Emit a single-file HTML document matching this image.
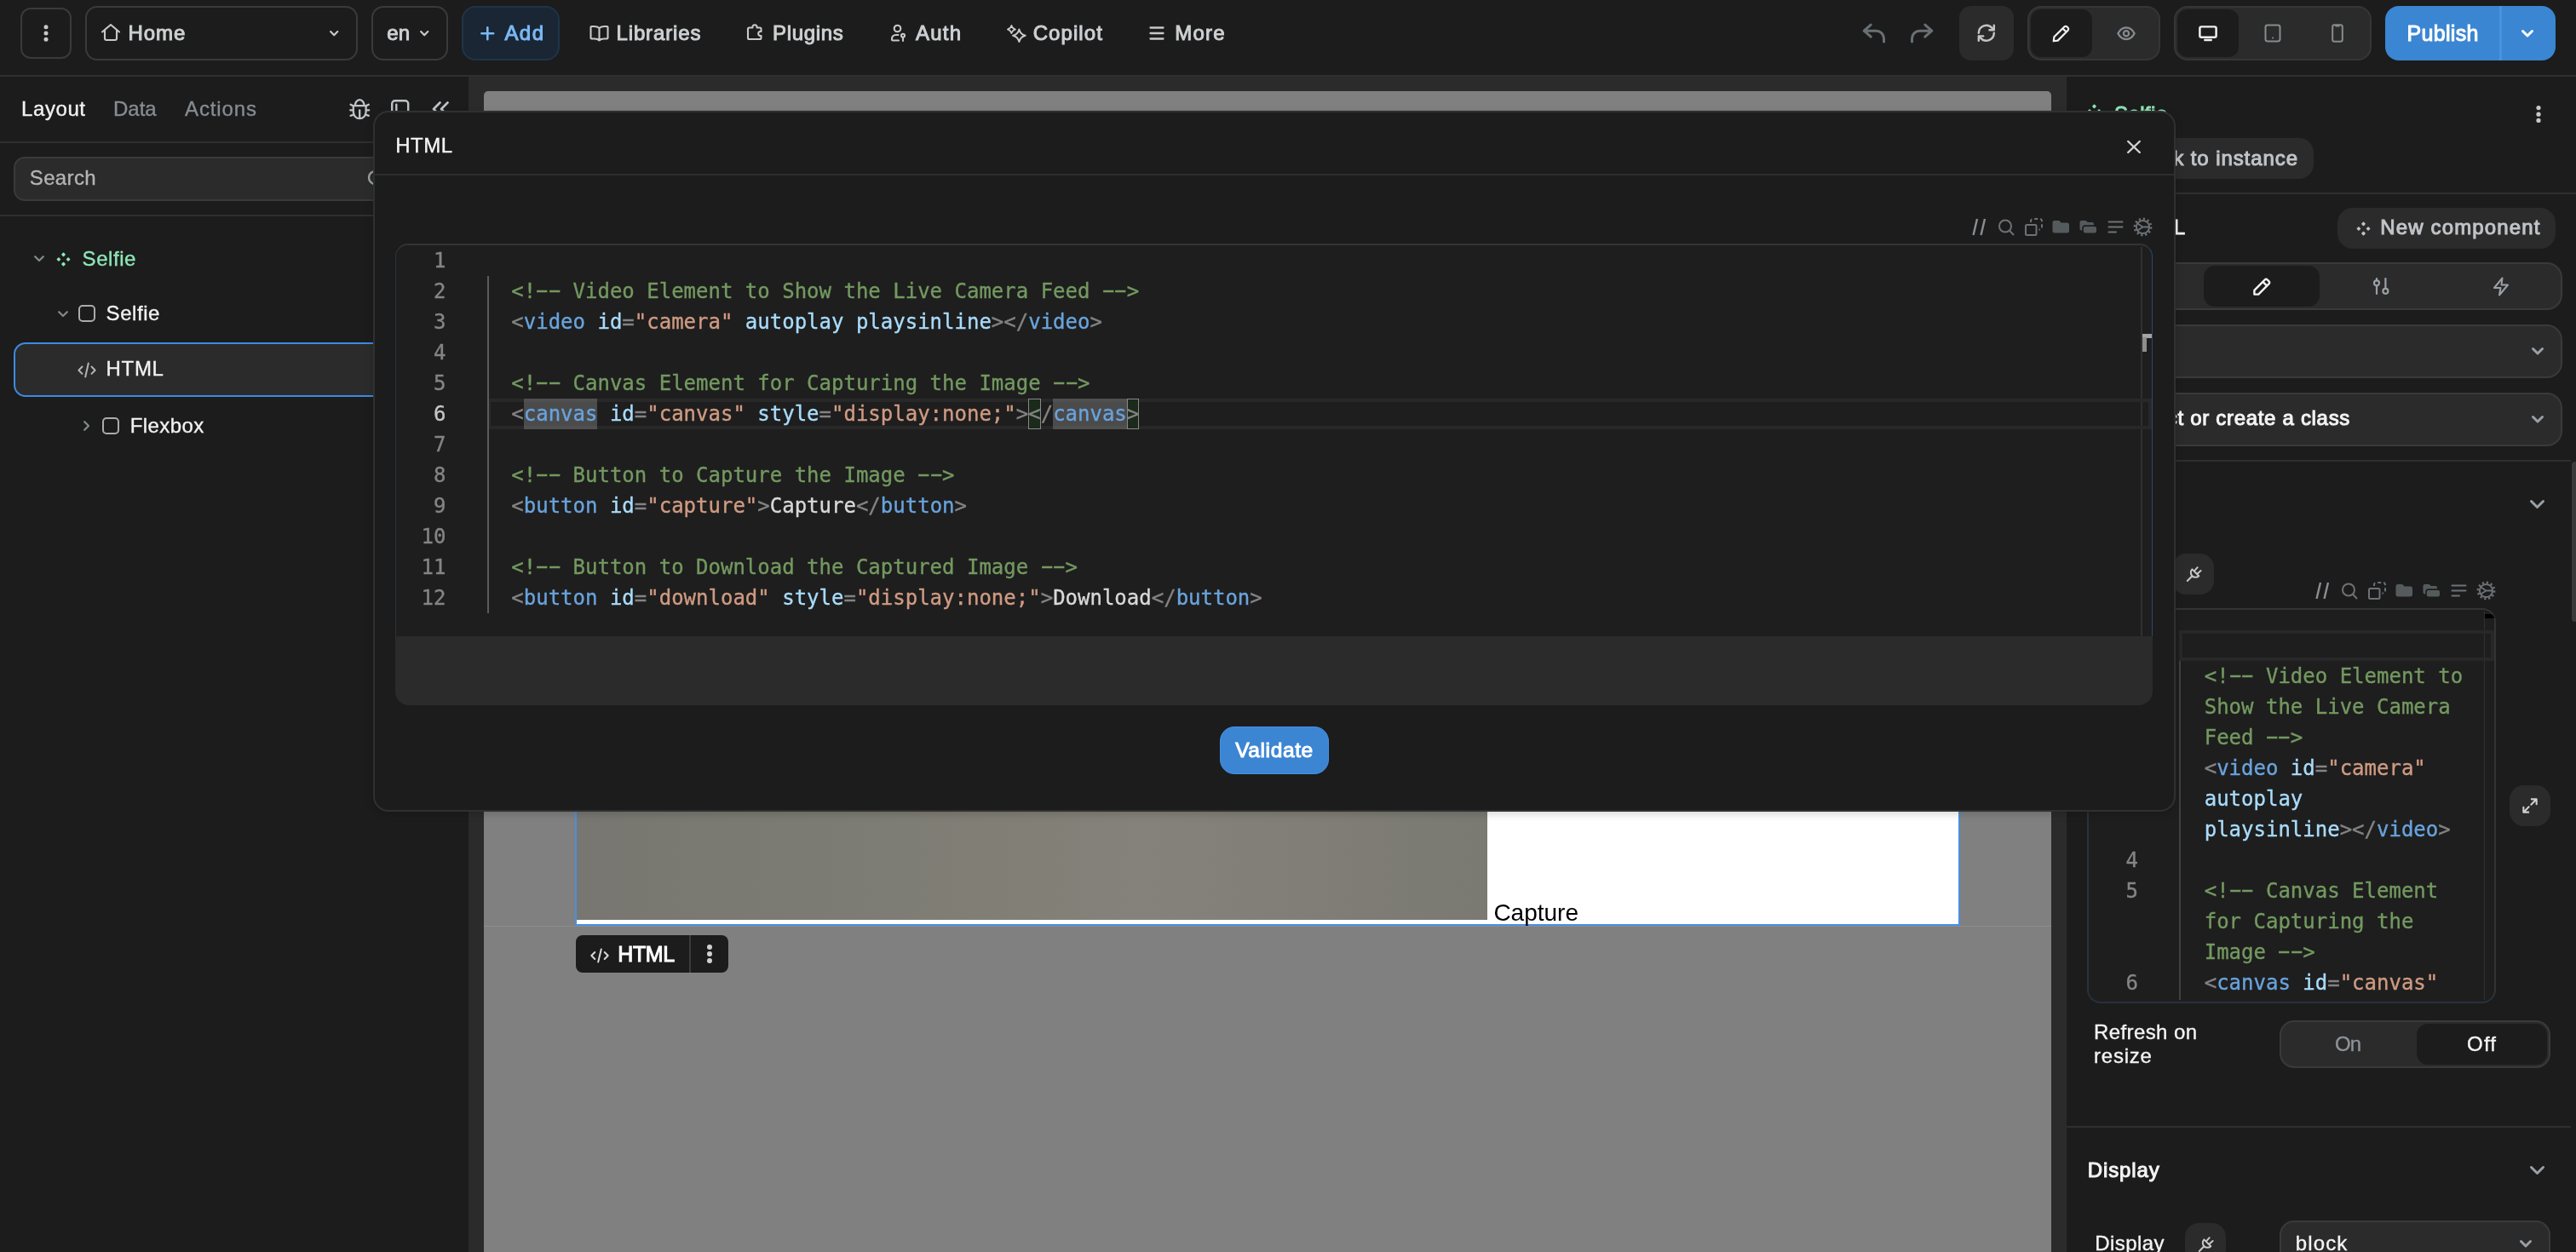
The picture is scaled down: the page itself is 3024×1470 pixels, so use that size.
<!DOCTYPE html>
<html lang="en">
<head>
<meta charset="utf-8">
<title>Editor</title>
<style>
*{box-sizing:border-box;margin:0;padding:0}
html,body{width:3024px;height:1470px;overflow:hidden;background:#1c1c1c}
body{position:relative;font-family:"Liberation Sans",sans-serif;color:#d6d6d6;font-size:24px;line-height:1}
.abs{position:absolute}
.t{position:absolute;white-space:nowrap;line-height:1;display:block;-webkit-text-stroke:0.35px currentColor}
.b{font-weight:400;-webkit-text-stroke:1px currentColor}
.m{-webkit-text-stroke:0.35px currentColor}
.bb{font-weight:700}
svg{position:absolute;overflow:visible}
.ic{fill:none;stroke:#c8c8c8;stroke-width:2.4;stroke-linecap:round;stroke-linejoin:round}
.mono{font-family:"DejaVu Sans Mono","Liberation Mono",monospace;font-size:24px;-webkit-text-stroke:0.35px currentColor}
/* ---------- top bar ---------- */
#topbar{left:0;top:0;width:3024px;height:88px;background:#1c1c1c;border-bottom:2px solid #2f2f2f;height:90px}
.obtn{border:2px solid #3a3a3a;border-radius:14px;background:#1c1c1c}
.fbtn{background:#2b2b2b;border-radius:14px}
.grp{background:#2b2b2b;border:2px solid #363636;border-radius:16px}
.act{background:#1c1c1c;border-radius:12px}
/* ---------- left ---------- */
#left{left:0;top:90px;width:550px;height:1380px;background:#1c1c1c}
.hl{position:absolute;height:2px;background:#2f2f2f}
/* ---------- canvas ---------- */
#canvasbg{left:550px;top:90px;width:1876px;height:1380px;background:#2b2b2b}
#frame{left:568px;top:107px;width:1840px;height:1400px;background:#808080;border-radius:5px 5px 0 0}
/* ---------- right ---------- */
#right{left:2426px;top:90px;width:598px;height:1380px;background:#1c1c1c}
/* ---------- modal ---------- */
#modal{left:437.5px;top:130px;width:2116.3px;height:823px;background:#1c1c1c;border:2px solid #2f3131;border-radius:18px;box-shadow:0 3px 10px rgba(0,0,0,.16)}
/* code colours */
.c{color:#739960}.g{color:#838383}.k{color:#69a3dd}.a{color:#a8dbfb}.s{color:#cf9a82}.w{color:#d8d8d8}
.hy{display:inline-block;transform:scaleX(1.9) translateY(-0.6px)}
.ln{position:absolute;text-align:right;color:#858585;line-height:36px;height:36px;white-space:pre}
.cl{position:absolute;line-height:36px;height:36px;white-space:pre}
@media (min-resolution:1.5dppx){html,body{width:1512px;height:735px}#root{zoom:.5}}
</style>
</head>
<body>
<div id="root" style="position:absolute;left:0;top:0;width:3024px;height:1470px;will-change:transform">

<!-- ================= TOP BAR ================= -->
<div id="topbar" class="abs">
  <div class="abs obtn" style="left:24px;top:9px;width:60px;height:60px;border-radius:12px"></div>
  <svg style="left:49px;top:27px" width="10" height="24" viewBox="0 0 10 24"><circle cx="5" cy="4.8" r="2.5" fill="#c8c8c8"/><circle cx="5" cy="12" r="2.5" fill="#c8c8c8"/><circle cx="5" cy="19.2" r="2.5" fill="#c8c8c8"/></svg>

  <div class="abs obtn" style="left:100px;top:7px;width:320px;height:64px"></div>
  <svg class="ic" style="left:118px;top:27px;stroke-width:2.1" width="24" height="22" viewBox="0 0 24 22"><path d="M2 10.5 L12 2 L22 10.5 M5 8.5 V18 a2 2 0 0 0 2 2 H17 a2 2 0 0 0 2 -2 V8.5"/></svg>
  <span class="t b" style="letter-spacing:0.92px;left:150.5px;top:26.5px;color:#cdd0d2">Home</span>
  <svg class="ic" style="left:387px;top:36px;stroke-width:2.2" width="10.4" height="6.6" viewBox="0 0 10.4 6.6"><path d="M1.1 1.1 L5.2 5.3 L9.3 1.1"/></svg>

  <div class="abs obtn" style="left:436px;top:7px;width:90px;height:64px"></div>
  <span class="t b" style="letter-spacing:-0.00px;left:454.3px;top:26.5px;color:#cdd0d2">en</span>
  <svg class="ic" style="left:493px;top:36px;stroke-width:2.2" width="10.4" height="6.6" viewBox="0 0 10.4 6.6"><path d="M1.1 1.1 L5.2 5.3 L9.3 1.1"/></svg>

  <div class="abs" style="left:542px;top:7px;width:115px;height:64px;background:#1a2633;border:2px solid #1f3448;border-radius:16px"></div>
  <svg class="ic" style="left:563.8px;top:30.8px;stroke:#7ab9f5;stroke-width:2.8" width="16.6" height="16.6" viewBox="0 0 18 18"><path d="M9 1.5 V16.5 M1.5 9 H16.5"/></svg>
  <span class="t b" style="letter-spacing:1.45px;left:592.4px;top:26.5px;color:#7ab9f5">Add</span>

  <svg class="ic" style="left:692px;top:29px;stroke-width:2.1" width="23" height="20" viewBox="0 0 23 20"><path d="M11.5 4 V18.5 M11.5 4 C10 2.6 8 2 5.5 2 H2.5 a1 1 0 0 0 -1 1 V15.5 a1 1 0 0 0 1 1 H6 C8.5 16.5 10.3 17.2 11.5 18.5 C12.7 17.2 14.5 16.5 17 16.5 H20.5 a1 1 0 0 0 1 -1 V3 a1 1 0 0 0 -1 -1 H17.5 C15 2 13 2.6 11.5 4"/></svg>
  <span class="t b" style="letter-spacing:0.86px;left:723.5px;top:26.5px;color:#cdd0d2">Libraries</span>

  <svg class="ic" style="left:876px;top:27px;stroke-width:2.1" width="20" height="21" viewBox="0 0 20 21"><path d="M7.5 5.5 a2.6 2.6 0 1 1 5 0 H16 a1.5 1.5 0 0 1 1.5 1.5 V10 a2.6 2.6 0 1 0 0 5 V17.5 a1.5 1.5 0 0 1 -1.5 1.5 H3.5 a1.5 1.5 0 0 1 -1.5 -1.5 V7 a1.5 1.5 0 0 1 1.5 -1.5 Z"/></svg>
  <span class="t b" style="letter-spacing:0.68px;left:907px;top:26.5px;color:#cdd0d2">Plugins</span>

  <svg class="ic" style="left:1045px;top:28px;stroke-width:2.1" width="19" height="21" viewBox="0 0 19 21"><circle cx="8.5" cy="5.5" r="3.8"/><path d="M9.5 13 H6.5 a4.5 4.5 0 0 0 -4.5 4.5 V18.5 a1 1 0 0 0 1 1 H10"/><circle cx="15" cy="13.8" r="2"/><path d="M15 15.8 V20"/></svg>
  <span class="t b" style="letter-spacing:1.21px;left:1075px;top:26.5px;color:#cdd0d2">Auth</span>

  <svg class="ic" style="left:1182px;top:27px;stroke-width:2" width="23" height="24" viewBox="0 0 23 24"><path d="M14.4 7.5 Q15.9 13.3 21.7 14.8 Q15.9 16.3 14.4 22.1 Q12.9 16.3 7.1 14.8 Q12.9 13.3 14.4 7.5 Z"/><path d="M5.4 2.9 Q6.4 6.5 10 7.5 Q6.4 8.5 5.4 12.1 Q4.4 8.5 .8 7.5 Q4.4 6.5 5.4 2.9 Z" stroke-width="1.7"/></svg>
  <span class="t b" style="letter-spacing:1.08px;left:1212.7px;top:26.5px;color:#cdd0d2">Copilot</span>

  <svg class="ic" style="left:1349px;top:30px;stroke-width:2.3" width="18" height="18" viewBox="0 0 18 18"><path d="M1.5 2.5 H16.5 M1.5 9 H16.5 M1.5 15.5 H16.5"/></svg>
  <span class="t b" style="letter-spacing:1.17px;left:1379.3px;top:26.5px;color:#cdd0d2">More</span>

  <!-- undo / redo -->
  <svg class="ic" style="left:2186px;top:27px;stroke:#697074;stroke-width:3" width="28" height="24" viewBox="0 0 28 24"><path d="M10.2 2.2 L2.2 9.2 L10.2 16.2 M2.2 9.2 H16.5 a9 9 0 0 1 9 9 V22"/></svg>
  <svg class="ic" style="left:2242px;top:27px;stroke:#697074;stroke-width:3" width="28" height="24" viewBox="0 0 28 24"><path d="M17.8 2.2 L25.8 9.2 L17.8 16.2 M25.8 9.2 H11.5 a9 9 0 0 0 -9 9 V22"/></svg>

  <div class="abs fbtn" style="left:2300px;top:7px;width:64px;height:64px"></div>
  <svg class="ic" style="left:2321.2px;top:28.2px;stroke-width:2.7;stroke:#c4c4c4" width="21.6" height="21.6" viewBox="0 0 24 24"><path d="M2 12 a10 10 0 0 1 17.5 -6.5 L22 8 M22 2 V8 H16 M22 12 a10 10 0 0 1 -17.5 6.5 L2 16 M2 22 V16 H8"/></svg>

  <div class="abs grp" style="left:2380px;top:7px;width:156px;height:64px"></div>
  <div class="abs act" style="left:2384px;top:11px;width:72px;height:56px"></div>
  <svg class="ic" style="left:2409px;top:28.5px;stroke:#f0f0f0;stroke-width:2.3" width="21" height="21" viewBox="0 0 22 22"><path d="M15 2.6 a2.4 2.4 0 0 1 3.4 0 l1 1 a2.4 2.4 0 0 1 0 3.4 L7 19.5 L1.8 20.2 L2.5 15 Z M13 4.6 L17.4 9"/></svg>
  <svg class="ic" style="left:2485.2px;top:30.8px;stroke:#868b8f;stroke-width:2.5" width="22" height="16.5" viewBox="0 0 24 18"><path d="M1.5 9 C4 4 7.5 1.5 12 1.5 S20 4 22.5 9 C20 14 16.5 16.5 12 16.5 S4 14 1.5 9 Z"/><circle cx="12" cy="9" r="3.4"/></svg>

  <div class="abs grp" style="left:2552px;top:7px;width:232px;height:64px"></div>
  <div class="abs act" style="left:2556px;top:11px;width:72px;height:56px"></div>
  <svg class="ic" style="left:2581px;top:29.8px;stroke:#f0f0f0;stroke-width:2.7" width="22" height="18.3" viewBox="0 0 24 20"><rect x="1.5" y="1.5" width="21" height="13.5" rx="2"/><path d="M8 18.6 H16" stroke-width="2.8"/></svg>
  <svg class="ic" style="left:2658px;top:28px;stroke:#868b8f;stroke-width:2" width="20" height="22" viewBox="0 0 20 22"><rect x="1.5" y="1.5" width="17" height="19" rx="2.4"/><path d="M10 16.6 H10.1"/></svg>
  <svg class="ic" style="left:2737px;top:28px;stroke:#868b8f;stroke-width:2" width="14" height="22" viewBox="0 0 14 22"><rect x="1.2" y="1.2" width="11.6" height="19.6" rx="2.2"/><path d="M5.5 2.4 H8.5" stroke-width="2.4"/></svg>

  <div class="abs" style="left:2800px;top:7px;width:200px;height:64px;background:#3a86d3;border-radius:16px"></div>
  <div class="abs" style="left:2934px;top:7px;width:3px;height:64px;background:#4a92e0"></div>
  <span class="t b" style="letter-spacing:0.33px;left:2825.5px;top:26.7px;color:#ffffff;font-size:25px">Publish</span>
  <svg class="ic" style="left:2960px;top:35px;stroke:#fff;stroke-width:3" width="14" height="9" viewBox="0 0 14 9"><path d="M1.5 1.5 L7 7 L12.5 1.5"/></svg>
</div>

<!-- ================= LEFT PANEL ================= -->
<div id="left" class="abs"></div>

<span class="t" style="letter-spacing:0.59px;left:25px;top:116px;color:#f2f2f2">Layout</span>
<span class="t" style="letter-spacing:-0.00px;left:133px;top:116px;color:#868c91">Data</span>
<span class="t" style="letter-spacing:0.88px;left:217px;top:116px;color:#868c91">Actions</span>
<!-- bug icon -->
<svg class="ic" style="left:410px;top:116px;stroke:#c0c4c6;stroke-width:2.3" width="24" height="24" viewBox="0 0 24 24"><path d="M4.8 8.2 H19.6 V15.6 a7.4 7.6 0 0 1 -14.8 0 Z M6.8 8.2 a5.4 7 0 0 1 10.8 0 M12.2 13.4 V22.8 M4.8 8.4 L1.6 6.8 M19.6 8.4 L22.8 6.8 M4.8 13.3 H1.2 M19.6 13.3 H23.2 M5.7 18.4 L1.6 19.8 M18.7 18.4 L22.8 19.8"/></svg>
<!-- panel icon -->
<svg class="ic" style="left:459.2px;top:116.7px;stroke:#c0c4c6;stroke-width:2.4" width="21.4" height="22" viewBox="0 0 21.4 22"><rect x="1.2" y="1.2" width="19" height="19.6" rx="3.5"/><path d="M6.3 5.8 V16.5"/></svg>
<!-- collapse icon -->
<svg class="ic" style="left:507.4px;top:119px;stroke:#c0c4c6;stroke-width:2.6" width="20" height="18" viewBox="0 0 20 18"><path d="M9.5 1.5 L2 9 L9.5 16.5 M18.5 1.5 L11 9 L18.5 16.5"/></svg>
<div class="hl" style="left:0;top:166px;width:550px"></div>
<div class="abs" style="left:16px;top:184px;width:518px;height:52px;background:#2b2b2b;border:2px solid #3a3a3a;border-radius:13px"></div>
<span class="t" style="letter-spacing:0.35px;left:34.8px;top:197px;color:#b4b4b4">Search</span>
<svg class="ic" style="left:431px;top:199px;stroke:#9aa0a5;stroke-width:2.4" width="22" height="22" viewBox="0 0 22 22"><circle cx="9.5" cy="9.5" r="7.5"/><path d="M15 15 L20.5 20.5"/></svg>
<div class="hl" style="left:0;top:252px;width:550px"></div>

<!-- tree row 1 -->
<svg class="ic" style="left:39.5px;top:300px;stroke:#82888c;stroke-width:2.3" width="12" height="7.4" viewBox="0 0 12 7.4"><path d="M1.2 1.2 L6 6 L10.8 1.2"/></svg>
<svg style="left:65.5px;top:295.5px" width="17" height="17" viewBox="0 0 17 17"><g fill="#8ee6b6"><rect x="6.65" y="1.05" width="3.7" height="3.7" rx=".8" transform="rotate(45 8.5 2.9)"/><rect x="6.65" y="12.25" width="3.7" height="3.7" rx=".8" transform="rotate(45 8.5 14.1)"/><rect x="1.05" y="6.65" width="3.7" height="3.7" rx=".8" transform="rotate(45 2.9 8.5)"/><rect x="12.25" y="6.65" width="3.7" height="3.7" rx=".8" transform="rotate(45 14.1 8.5)"/></g></svg>
<span class="t" style="letter-spacing:0.55px;left:96.6px;top:291.5px;color:#8ee6b6">Selfie</span>
<!-- tree row 2 -->
<svg class="ic" style="left:67.5px;top:364.5px;stroke:#82888c;stroke-width:2.3" width="12" height="7.4" viewBox="0 0 12 7.4"><path d="M1.2 1.2 L6 6 L10.8 1.2"/></svg>
<div class="abs" style="left:92.4px;top:358.4px;width:19.4px;height:19.4px;border:2px solid #ababab;border-radius:5px"></div>
<span class="t" style="letter-spacing:0.55px;left:124.6px;top:356.2px;color:#f2f2f2">Selfie</span>
<!-- tree row 3 (selected) -->
<div class="abs" style="left:16px;top:402px;width:518px;height:64px;background:#2b2b2b;border:2px solid #3d8be0;border-radius:14px"></div>
<svg class="ic" style="left:91px;top:424.5px;stroke:#b4b4b4;stroke-width:2" width="22" height="19" viewBox="0 0 22 19"><path d="M5.5 5.5 L1.4 9.7 L5.5 13.9 M16.5 5.5 L20.6 9.7 L16.5 13.9 M12.8 1.5 L9.2 17.5"/></svg>
<span class="t" style="letter-spacing:0.65px;left:124.6px;top:421.4px;color:#f2f2f2">HTML</span>
<!-- tree row 4 -->
<svg class="ic" style="left:98px;top:493.5px;stroke:#82888c;stroke-width:2.3" width="7.4" height="12" viewBox="0 0 7.4 12"><path d="M1.2 1.2 L6 6 L1.2 10.8"/></svg>
<div class="abs" style="left:120.3px;top:490.3px;width:19.4px;height:19.4px;border:2px solid #ababab;border-radius:5px"></div>
<span class="t" style="letter-spacing:0.43px;left:152.7px;top:487.9px;color:#f2f2f2">Flexbox</span>


<!-- ================= CANVAS ================= -->
<div id="canvasbg" class="abs"></div>
<div id="frame" class="abs"></div>

<div class="abs" style="left:568px;top:1087px;width:1840px;height:1px;background:#8d8d8d"></div>
<div class="abs" style="left:674.6px;top:300px;width:1626px;height:787px;background:#ffffff;border:2px solid #4a8fe0"></div>
<div class="abs" style="left:676.6px;top:302px;width:1069px;height:778px;background:linear-gradient(90deg,#777670 0%,#7c7b73 25%,#817f76 50%,#84827a 62%,#807e76 80%,#7a7972 100%)"></div>
<span class="t" style="letter-spacing:-0.00px;left:1753.4px;top:1057.8px;color:#000;font-size:28px;-webkit-text-stroke:0">Capture</span>
<!-- element tag -->
<div class="abs" style="left:676px;top:1098px;width:179px;height:44px;background:#1c1c1c;border-radius:8px;box-shadow:0 0 0 1px rgba(120,135,140,.5)"></div>
<div class="abs" style="left:809px;top:1098px;width:2px;height:44px;background:#3c3c3c"></div>
<svg class="ic" style="left:693px;top:1112.5px;stroke:#d8d8d8;stroke-width:2" width="22" height="18" viewBox="0 0 22 18"><path d="M5.3 5 L1.3 9 L5.3 13 M16.7 5 L20.7 9 L16.7 13 M12.8 1.5 L9.2 16.5"/></svg>
<span class="t b" style="letter-spacing:-0.35px;left:725.2px;top:1107.5px;color:#fff;font-size:25px">HTML</span>
<svg style="left:829px;top:1108px" width="8" height="24" viewBox="0 0 8 24"><circle cx="4" cy="4" r="3" fill="#d0d0d0"/><circle cx="4" cy="12" r="3" fill="#d0d0d0"/><circle cx="4" cy="20" r="3" fill="#d0d0d0"/></svg>


<!-- ================= RIGHT PANEL ================= -->
<div id="right" class="abs"></div>
<!--RIGHT-->
<svg style="left:2449.7px;top:122.3px" width="17" height="17" viewBox="0 0 17 17"><g fill="#8ee6b6"><rect x="6.65" y="1.05" width="3.7" height="3.7" rx=".8" transform="rotate(45 8.5 2.9)"/><rect x="6.65" y="12.25" width="3.7" height="3.7" rx=".8" transform="rotate(45 8.5 14.1)"/><rect x="1.05" y="6.65" width="3.7" height="3.7" rx=".8" transform="rotate(45 2.9 8.5)"/><rect x="12.25" y="6.65" width="3.7" height="3.7" rx=".8" transform="rotate(45 14.1 8.5)"/></g></svg>
<span class="t b" style="letter-spacing:0.39px;left:2482px;top:121.8px;color:#8ee6b6">Selfie</span>
<svg style="left:2976px;top:123px" width="8" height="22" viewBox="0 0 8 22"><circle cx="4" cy="3.6" r="2.6" fill="#c8c8c8"/><circle cx="4" cy="11.2" r="2.6" fill="#c8c8c8"/><circle cx="4" cy="18.4" r="2.6" fill="#c8c8c8"/></svg>
<div class="abs" style="left:2450px;top:162px;width:266px;height:48px;background:#2b2b2b;border-radius:17px"></div>
<svg class="ic" style="left:2470px;top:177px;stroke:#c0c4c8;stroke-width:2.6" width="20" height="18" viewBox="0 0 20 18"><path d="M9 1.5 L1.5 9 L9 16.5 M1.5 9 H18.5"/></svg>
<span class="t b" style="letter-spacing:0.93px;left:2507px;top:173.6px;color:#c0c4c8">Back to instance</span>
<div class="hl" style="left:2426px;top:226px;width:598px"></div>
<span class="t b" style="letter-spacing:0.55px;left:2498px;top:255.4px;color:#f4f4f4">HTML</span>
<div class="abs" style="left:2744px;top:244px;width:256px;height:48px;background:#2b2b2b;border-radius:18px"></div>
<svg style="left:2765.5px;top:259.5px" width="17" height="17" viewBox="0 0 17 17"><g fill="#c0c4c8"><rect x="6.65" y="1.05" width="3.7" height="3.7" rx=".8" transform="rotate(45 8.5 2.9)"/><rect x="6.65" y="12.25" width="3.7" height="3.7" rx=".8" transform="rotate(45 8.5 14.1)"/><rect x="1.05" y="6.65" width="3.7" height="3.7" rx=".8" transform="rotate(45 2.9 8.5)"/><rect x="12.25" y="6.65" width="3.7" height="3.7" rx=".8" transform="rotate(45 14.1 8.5)"/></g></svg>
<span class="t b" style="letter-spacing:1.16px;left:2794.2px;top:255.4px;color:#c0c4c8">New component</span>
<div class="abs grp" style="left:2450px;top:308px;width:558px;height:56px;border-radius:18px;border-color:#3a3a3a"></div>
<div class="abs act" style="left:2587px;top:311.6px;width:136px;height:48.6px;border-radius:13px"></div>
<svg class="ic" style="left:2644px;top:325.5px;stroke:#f4f4f4;stroke-width:2.4" width="22" height="22" viewBox="0 0 22 22"><path d="M14.6 2.6 a2.3 2.3 0 0 1 3.2 0 l1.6 1.6 a2.3 2.3 0 0 1 0 3.2 L7.2 19.6 H2.4 V14.8 Z M12.4 4.8 L17.2 9.6"/></svg>
<svg class="ic" style="left:2785px;top:326px;stroke:#9aa0a5;stroke-width:2.2" width="20" height="20" viewBox="0 0 20 20"><circle cx="5" cy="6.3" r="3"/><path d="M5 9.3 V19 M5 1.2 V3.3"/><circle cx="15.4" cy="15.8" r="3"/><path d="M15.4 1.2 V12.8"/></svg>
<svg class="ic" style="left:2926px;top:324.5px;stroke:#9aa0a5;stroke-width:2" width="20" height="23" viewBox="0 0 20 23"><path d="M11.5 1.5 L2 13 H9.5 L8 21.5 L18 9.5 H10.5 Z"/></svg>
<div class="abs grp" style="left:2450px;top:380.5px;width:558px;height:63.5px;border-radius:18px;border-color:#3a3a3a"></div>
<svg class="ic" style="left:2971.5px;top:407.5px;stroke:#9aa0a5;stroke-width:3" width="14" height="9" viewBox="0 0 14 9"><path d="M1.5 1.5 L7 7 L12.5 1.5"/></svg>
<div class="abs grp" style="left:2450px;top:460.5px;width:558px;height:63.5px;border-radius:18px;border-color:#3a3a3a"></div>
<span class="t b" style="letter-spacing:0.69px;left:2493px;top:478.9px;color:#f4f4f4">Select or create a class</span>
<svg class="ic" style="left:2971.5px;top:487.5px;stroke:#9aa0a5;stroke-width:3" width="14" height="9" viewBox="0 0 14 9"><path d="M1.5 1.5 L7 7 L12.5 1.5"/></svg>
<div class="hl" style="left:2426px;top:540px;width:592px"></div>
<div class="abs" style="left:3018.5px;top:542px;width:7px;height:188px;background:#3a3a3a;border-radius:4px"></div>
<svg class="ic" style="left:2969.5px;top:586.5px;stroke:#9aa0a5;stroke-width:3" width="17" height="11" viewBox="0 0 17 11"><path d="M1.5 1.5 L8.5 8.5 L15.5 1.5"/></svg>
<div class="abs" style="left:2550px;top:650px;width:48.5px;height:48px;background:#2b2b2b;border-radius:16px"></div>
<svg class="ic" style="left:2566.5px;top:664.9px;stroke:#c8c8c8;stroke-width:2" width="17.5" height="18" viewBox="0 0 17.5 18"><path d="M6.4 3.4 L14.3 11.2 A5.55 5.55 0 0 1 6.4 3.4 Z M8.7 5.6 L12.7 1.2 M12.1 9 L16.6 5 M6.4 11.2 L0.8 17"/></svg>
<svg style="left:2718.2px;top:683.2px" width="214" height="22" viewBox="0 0 214 22"><g>
<path d="M10.5 1 L6 20 M19.5 1 L15 20" stroke="#8a8f94" stroke-width="2.4" fill="none" stroke-linecap="butt" transform="translate(-4.5 0)"/>
<g transform="translate(31 0)" fill="none" stroke="#6d7276" stroke-width="2"><circle cx="8" cy="9.5" r="7"/><path d="M13 14.8 L18 20"/></g>
<g transform="translate(62 0)" fill="none" stroke="#6d7276" stroke-width="2"><rect x="1" y="8" width="12.5" height="12" rx="1.5"/><path d="M7 5 V3.5 a2.5 2.5 0 0 1 2.5 -2.5 H17.5 a2.5 2.5 0 0 1 2.5 2.5 V11 a2.5 2.5 0 0 1 -2.5 2.5 H16.5" stroke-dasharray="4 3"/></g>
<g transform="translate(94.5 0)" fill="#555b5d"><path d="M0 5.5 a2.5 2.5 0 0 1 2.5 -2.5 H7 a2 2 0 0 1 1.6 .8 L10 5.5 H17 a2.5 2.5 0 0 1 2.5 2.5 V15 a2.5 2.5 0 0 1 -2.5 2.5 H2.5 a2.5 2.5 0 0 1 -2.5 -2.5 Z"/></g>
<g transform="translate(126.5 0)" fill="#555b5d"><path d="M0 5 a2 2 0 0 1 2 -2 H6.5 a2 2 0 0 1 1.6 .8 L9.2 5 H14.5 a2 2 0 0 1 2 2 V8.3 H6.5 a3.8 3.8 0 0 0 -3.8 3.8 V14.6 H2 a2 2 0 0 1 -2 -2 Z"/><path d="M4.3 12 a2 2 0 0 1 2 -2 H17.5 a2 2 0 0 1 2 2 V15.5 a2 2 0 0 1 -2 2 H6.3 a2 2 0 0 1 -2 -2 Z"/></g>
<g transform="translate(159.5 0)" fill="none" stroke="#6d7276" stroke-width="2" stroke-linecap="round"><path d="M1 4.5 H17 M1 10.5 H17 M1 16.5 H9.5"/></g>
<g transform="translate(189.5 0)" fill="none" stroke="#6d7276" stroke-width="2"><circle cx="11" cy="10.5" r="7.6"/><circle cx="11" cy="10.5" r="9.6" stroke-width="2.6" stroke-dasharray="2.2 2.83"/><path d="M11 10.5 L4.5 6.2 M11 10.5 L4.5 14.8 M11 10.5 H18.5" stroke-width="1.8"/></g>
</g></svg>
<div class="abs" style="left:2450px;top:714px;width:480px;height:464px;background:#1e1e1e;border:2px solid #333;border-radius:16px;border-left-color:#27323d;border-bottom-color:#27323d"></div>
<div class="abs" style="left:2558px;top:776px;width:2px;height:398px;background:#404040"></div>
<div class="abs" style="left:2915.5px;top:718px;width:1.5px;height:456px;background:#303030"></div>
<div class="abs" style="left:2917px;top:721px;width:10.5px;height:4.5px;background:#000;border-radius:0 5px 0 0"></div>
<div class="abs" style="left:2558px;top:740px;width:370px;height:36px;border:4px solid #282828"></div>
<div class="ln mono" style="left:2456.5px;top:739.6px;width:53.5px">1</div>
<div class="ln mono" style="left:2456.5px;top:775.6px;width:53.5px">2</div>
<div class="cl mono" style="left:2587.7px;top:775.6px"><span class="c">&lt;!<span class="hy">-</span><span class="hy">-</span> Video Element to</span></div>
<div class="cl mono" style="left:2587.7px;top:811.6px"><span class="c">Show the Live Camera</span></div>
<div class="cl mono" style="left:2587.7px;top:847.6px"><span class="c">Feed <span class="hy">-</span><span class="hy">-</span>&gt;</span></div>
<div class="ln mono" style="left:2456.5px;top:883.6px;width:53.5px">3</div>
<div class="cl mono" style="left:2587.7px;top:883.6px"><span class="g">&lt;</span><span class="k">video</span><span class="w"> </span><span class="a">id</span><span class="g">=</span><span class="s">"camera"</span></div>
<div class="cl mono" style="left:2587.7px;top:919.6px"><span class="a">autoplay</span></div>
<div class="cl mono" style="left:2587.7px;top:955.6px"><span class="a">playsinline</span><span class="g">&gt;&lt;/</span><span class="k">video</span><span class="g">&gt;</span></div>
<div class="ln mono" style="left:2456.5px;top:991.6px;width:53.5px">4</div>
<div class="ln mono" style="left:2456.5px;top:1027.6px;width:53.5px">5</div>
<div class="cl mono" style="left:2587.7px;top:1027.6px"><span class="c">&lt;!<span class="hy">-</span><span class="hy">-</span> Canvas Element</span></div>
<div class="cl mono" style="left:2587.7px;top:1063.6px"><span class="c">for Capturing the</span></div>
<div class="cl mono" style="left:2587.7px;top:1099.6px"><span class="c">Image <span class="hy">-</span><span class="hy">-</span>&gt;</span></div>
<div class="ln mono" style="left:2456.5px;top:1135.6px;width:53.5px">6</div>
<div class="cl mono" style="left:2587.7px;top:1135.6px"><span class="g">&lt;</span><span class="k">canvas</span><span class="w"> </span><span class="a">id</span><span class="g">=</span><span class="s">"canvas"</span></div>
<div class="abs" style="left:2440px;top:1178px;width:500px;height:13px;background:#1c1c1c"></div>
<div class="abs" style="left:2946px;top:922px;width:48px;height:48px;background:#2b2b2b;border-radius:17px"></div>
<svg class="ic" style="left:2961px;top:937px;stroke:#d0d0d0;stroke-width:2.3" width="18" height="18" viewBox="0 0 20 20"><path d="M12 1.5 H18.5 V8 M18.5 1.5 L11.5 8.5 M8 18.5 H1.5 V12 M1.5 18.5 L8.5 11.5"/></svg>
<span class="t" style="letter-spacing:0.40px;left:2458px;top:1199.5px;color:#f4f4f4">Refresh on</span>
<span class="t" style="letter-spacing:0.79px;left:2458px;top:1228px;color:#f4f4f4">resize</span>
<div class="abs grp" style="left:2676px;top:1198px;width:318px;height:55.5px;border-radius:17px;border-color:#3a3a3a"></div>
<div class="abs act" style="left:2837px;top:1202px;width:153px;height:47.5px;border-radius:13px"></div>
<span class="t" style="letter-spacing:-1.02px;left:2741px;top:1213.5px;color:#8d9398">On</span>
<span class="t" style="letter-spacing:1.21px;left:2896px;top:1213.5px;color:#f4f4f4">Off</span>
<div class="hl" style="left:2426px;top:1322px;width:592px"></div>
<span class="t b" style="letter-spacing:0.90px;left:2450.7px;top:1361.5px;color:#f4f4f4">Display</span>
<svg class="ic" style="left:2969.5px;top:1368.5px;stroke:#9aa0a5;stroke-width:3" width="17" height="11" viewBox="0 0 17 11"><path d="M1.5 1.5 L8.5 8.5 L15.5 1.5"/></svg>
<span class="t" style="letter-spacing:0.45px;left:2459.2px;top:1447.8px;color:#f4f4f4">Display</span>
<div class="abs" style="left:2565px;top:1436px;width:48px;height:48px;background:#2b2b2b;border-radius:16px"></div>
<svg class="ic" style="left:2580.5px;top:1451.5px;stroke:#c8c8c8;stroke-width:2" width="17.5" height="18" viewBox="0 0 17.5 18"><path d="M6.4 3.4 L14.3 11.2 A5.55 5.55 0 0 1 6.4 3.4 Z M8.7 5.6 L12.7 1.2 M12.1 9 L16.6 5 M6.4 11.2 L0.8 17"/></svg>
<div class="abs grp" style="left:2676px;top:1432.5px;width:318px;height:60px;border-radius:17px;border-color:#3a3a3a"></div>
<span class="t" style="letter-spacing:1.14px;left:2694.7px;top:1447.8px;color:#f4f4f4">block</span>
<svg class="ic" style="left:2957.5px;top:1455.5px;stroke:#9aa0a5;stroke-width:3" width="14" height="9" viewBox="0 0 14 9"><path d="M1.5 1.5 L7 7 L12.5 1.5"/></svg>
<!--/RIGHT-->

<!-- ================= MODAL ================= -->
<div id="modal" class="abs"></div>
<span class="t" style="letter-spacing:0.45px;left:464.3px;top:159.4px;color:#f4f4f4">HTML</span>
<svg class="ic" style="left:2496.5px;top:164.5px;stroke:#d4d4d4;stroke-width:2.4" width="16" height="15" viewBox="0 0 16 15"><path d="M1.2 1 L14.8 14 M14.8 1 L1.2 14"/></svg>
<div class="hl" style="left:439px;top:204px;width:2113px;background:#2e2e2e"></div>
<svg style="left:2315.3px;top:255.6px" width="214" height="22" viewBox="0 0 214 22"><g id="tbicons">
<path d="M10.5 1 L6 20 M19.5 1 L15 20" stroke="#8a8f94" stroke-width="2.4" fill="none" stroke-linecap="butt" transform="translate(-4.5 0)"/>
<g transform="translate(31 0)" fill="none" stroke="#6d7276" stroke-width="2"><circle cx="8" cy="9.5" r="7"/><path d="M13 14.8 L18 20"/></g>
<g transform="translate(62 0)" fill="none" stroke="#6d7276" stroke-width="2"><rect x="1" y="8" width="12.5" height="12" rx="1.5"/><path d="M7 5 V3.5 a2.5 2.5 0 0 1 2.5 -2.5 H17.5 a2.5 2.5 0 0 1 2.5 2.5 V11 a2.5 2.5 0 0 1 -2.5 2.5 H16.5" stroke-dasharray="4 3"/></g>
<g transform="translate(94.5 0)" fill="#555b5d"><path d="M0 5.5 a2.5 2.5 0 0 1 2.5 -2.5 H7 a2 2 0 0 1 1.6 .8 L10 5.5 H17 a2.5 2.5 0 0 1 2.5 2.5 V15 a2.5 2.5 0 0 1 -2.5 2.5 H2.5 a2.5 2.5 0 0 1 -2.5 -2.5 Z"/></g>
<g transform="translate(126.5 0)" fill="#555b5d"><path d="M0 5 a2 2 0 0 1 2 -2 H6.5 a2 2 0 0 1 1.6 .8 L9.2 5 H14.5 a2 2 0 0 1 2 2 V8.3 H6.5 a3.8 3.8 0 0 0 -3.8 3.8 V14.6 H2 a2 2 0 0 1 -2 -2 Z"/><path d="M4.3 12 a2 2 0 0 1 2 -2 H17.5 a2 2 0 0 1 2 2 V15.5 a2 2 0 0 1 -2 2 H6.3 a2 2 0 0 1 -2 -2 Z"/></g>
<g transform="translate(159.5 0)" fill="none" stroke="#6d7276" stroke-width="2" stroke-linecap="round"><path d="M1 4.5 H17 M1 10.5 H17 M1 16.5 H9.5"/></g>
<g transform="translate(189.5 0)" fill="none" stroke="#6d7276" stroke-width="2"><circle cx="11" cy="10.5" r="7.6"/><circle cx="11" cy="10.5" r="9.6" stroke-width="2.6" stroke-dasharray="2.2 2.83"/><path d="M11 10.5 L4.5 6.2 M11 10.5 L4.5 14.8 M11 10.5 H18.5" stroke-width="1.8"/></g>
</g></svg>
<div class="abs" style="left:464px;top:286px;width:2062.5px;height:542px;background:#2b2b2b;border-radius:16px"></div>
<div class="abs" style="left:464px;top:286px;width:2062.5px;height:461px;background:#1e1e1e;border-radius:15px 15px 0 0;border-top:2px solid #333;border-left:1.5px solid #27323d;border-right:1.5px solid #2b4770"></div>
<div class="abs" style="left:2513px;top:290px;width:1.5px;height:457px;background:#303030"></div>
<div class="abs" style="left:2514.5px;top:392px;width:11px;height:4.5px;background:#a4a4a4"></div>
<div class="abs" style="left:2514.5px;top:396px;width:5.5px;height:17px;background:#8e8e8e"></div>
<div class="abs" style="left:572px;top:467.6px;width:1954px;height:36px;border:4px solid #282828"></div>
<div class="abs" style="left:614.8px;top:467.6px;width:86.7px;height:36px;background:rgba(120,120,120,.5)"></div>
<div class="abs" style="left:1236.1px;top:467.6px;width:86.7px;height:36px;background:rgba(120,120,120,.5)"></div>
<div class="abs" style="left:1207.2px;top:467.6px;width:14.4px;height:36px;background:#1b2a1b;border:1.5px solid #888"></div>
<div class="abs" style="left:1322.8px;top:467.6px;width:14.4px;height:36px;background:#1b2a1b;border:1.5px solid #888"></div>
<div class="abs" style="left:571.5px;top:324px;width:2px;height:396px;background:#5c5c5c"></div>
<div class="ln mono" style="left:471px;top:287.6px;width:52.5px;color:#858585">1</div>
<div class="ln mono" style="left:471px;top:323.6px;width:52.5px;color:#858585">2</div>
<div class="cl mono" style="left:600.3px;top:323.6px"><span class="c">&lt;!<span class="hy">-</span><span class="hy">-</span> Video Element to Show the Live Camera Feed <span class="hy">-</span><span class="hy">-</span>&gt;</span></div>
<div class="ln mono" style="left:471px;top:359.6px;width:52.5px;color:#858585">3</div>
<div class="cl mono" style="left:600.3px;top:359.6px"><span class="g">&lt;</span><span class="k">video</span><span class="w"> </span><span class="a">id</span><span class="g">=</span><span class="s">"camera"</span><span class="w"> </span><span class="a">autoplay</span><span class="w"> </span><span class="a">playsinline</span><span class="g">&gt;&lt;/</span><span class="k">video</span><span class="g">&gt;</span></div>
<div class="ln mono" style="left:471px;top:395.6px;width:52.5px;color:#858585">4</div>
<div class="ln mono" style="left:471px;top:431.6px;width:52.5px;color:#858585">5</div>
<div class="cl mono" style="left:600.3px;top:431.6px"><span class="c">&lt;!<span class="hy">-</span><span class="hy">-</span> Canvas Element for Capturing the Image <span class="hy">-</span><span class="hy">-</span>&gt;</span></div>
<div class="ln mono" style="left:471px;top:467.6px;width:52.5px;color:#c6c6c6">6</div>
<div class="cl mono" style="left:600.3px;top:467.6px"><span class="g">&lt;</span><span class="k">canvas</span><span class="w"> </span><span class="a">id</span><span class="g">=</span><span class="s">"canvas"</span><span class="w"> </span><span class="a">style</span><span class="g">=</span><span class="s">"display:none;"</span><span class="g">&gt;&lt;/</span><span class="k">canvas</span><span class="g">&gt;</span></div>
<div class="ln mono" style="left:471px;top:503.6px;width:52.5px;color:#858585">7</div>
<div class="ln mono" style="left:471px;top:539.6px;width:52.5px;color:#858585">8</div>
<div class="cl mono" style="left:600.3px;top:539.6px"><span class="c">&lt;!<span class="hy">-</span><span class="hy">-</span> Button to Capture the Image <span class="hy">-</span><span class="hy">-</span>&gt;</span></div>
<div class="ln mono" style="left:471px;top:575.6px;width:52.5px;color:#858585">9</div>
<div class="cl mono" style="left:600.3px;top:575.6px"><span class="g">&lt;</span><span class="k">button</span><span class="w"> </span><span class="a">id</span><span class="g">=</span><span class="s">"capture"</span><span class="g">&gt;</span><span class="w">Capture</span><span class="g">&lt;/</span><span class="k">button</span><span class="g">&gt;</span></div>
<div class="ln mono" style="left:471px;top:611.6px;width:52.5px;color:#858585">10</div>
<div class="ln mono" style="left:471px;top:647.6px;width:52.5px;color:#858585">11</div>
<div class="cl mono" style="left:600.3px;top:647.6px"><span class="c">&lt;!<span class="hy">-</span><span class="hy">-</span> Button to Download the Captured Image <span class="hy">-</span><span class="hy">-</span>&gt;</span></div>
<div class="ln mono" style="left:471px;top:683.6px;width:52.5px;color:#858585">12</div>
<div class="cl mono" style="left:600.3px;top:683.6px"><span class="g">&lt;</span><span class="k">button</span><span class="w"> </span><span class="a">id</span><span class="g">=</span><span class="s">"download"</span><span class="w"> </span><span class="a">style</span><span class="g">=</span><span class="s">"display:none;"</span><span class="g">&gt;</span><span class="w">Download</span><span class="g">&lt;/</span><span class="k">button</span><span class="g">&gt;</span></div>
<div class="abs" style="left:1432px;top:852.8px;width:128.4px;height:56.3px;background:#3b85d3;border:1.5px solid #4591e2;border-radius:17px"></div>
<span class="t b" style="letter-spacing:0.61px;left:1450.2px;top:868.6px;color:#fff;font-size:24.5px">Validate</span>


</div>
</body>
</html>
